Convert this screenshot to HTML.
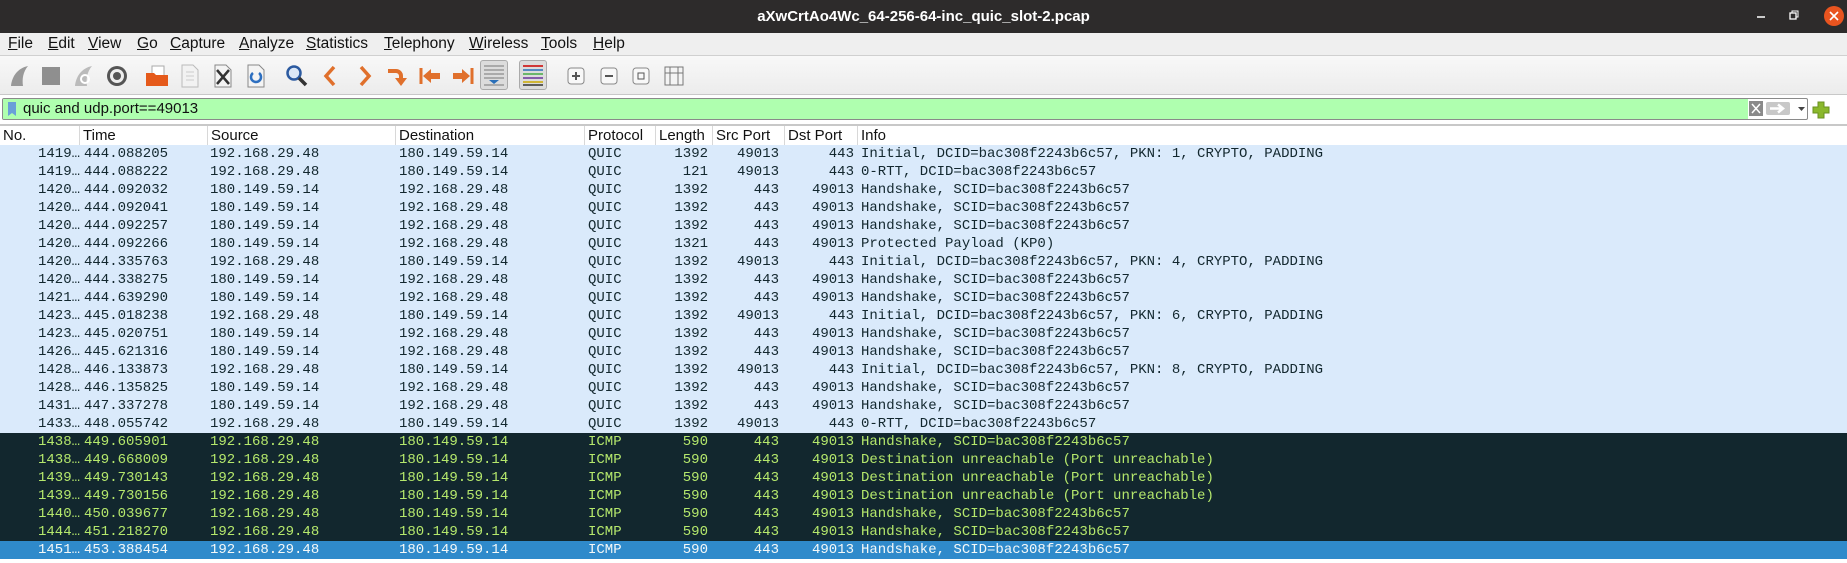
<!DOCTYPE html>
<html><head><meta charset="utf-8"><style>
*{margin:0;padding:0;box-sizing:border-box}
body{width:1847px;height:563px;overflow:hidden;background:#fff;font-family:"Liberation Sans",sans-serif;position:relative}
#title{position:absolute;left:0;top:0;width:1847px;height:33px;background:#2d2b2b;color:#fff;font-weight:bold;font-size:15px;text-align:center;line-height:33px}
#menu{position:absolute;top:33px;left:0;width:1847px;height:22px;background:#efefef;font-size:15.5px;line-height:22px;color:#111}
#menu span{position:absolute;top:0}
#menu u{text-decoration:underline}
#tb{position:absolute;top:55px;left:0;width:1847px;height:40px;background:linear-gradient(#f8f8f8,#ececec);border-top:1px solid #d0d0d0;border-bottom:1px solid #c8c8c8}
.ic{position:absolute;top:8px;width:24px;height:24px}
#flt{position:absolute;top:98px;left:2px;width:1806px;height:22px;border:1px solid #8a8a8a;border-radius:2px;background:#fff;overflow:hidden}
#flt .g{position:absolute;left:0;top:0;width:1745px;height:20px;background:#afffaf}
#flt .t{position:absolute;left:20px;top:0;line-height:20px;font-size:15px;color:#111}
#hdr{position:absolute;top:124px;left:0;width:1847px;height:21px;border-top:2px solid #c8c8c8;background:#fff;font-size:15px;line-height:19px;color:#111}
#hdr span{position:absolute;top:0;padding-left:3px;border-left:1px solid #d8d8d8;height:19px}
.r{position:absolute;left:0;width:1847px;height:18px;font-family:"Liberation Mono",monospace;font-size:14px;line-height:18px;white-space:pre}
.r span{position:absolute;top:0}
.L{background:#daeafb;color:#12272e}
.D{background:#12272e;color:#b5e86c}
.S{background:#2f8acb;color:#f4f8f8}
</style></head><body>
<div id="title">aXwCrtAo4Wc_64-256-64-inc_quic_slot-2.pcap</div>
<svg style="position:absolute;left:1745px;top:5px" width="102" height="24"><line x1="12" y1="12" x2="20" y2="12" stroke="#fff" stroke-width="1.5"/><rect x="45" y="8" width="6" height="6" fill="none" stroke="#fff" stroke-width="1.3"/><path d="M47 8V6h6v6h-2" fill="none" stroke="#fff" stroke-width="1"/><circle cx="89" cy="11" r="10" fill="#e9541f"/><path d="M85 7l8 8M93 7l-8 8" stroke="#fff" stroke-width="1.6"/></svg>
<div id="menu">
<span style="left:8px"><u>F</u>ile</span><span style="left:48px"><u>E</u>dit</span><span style="left:88px"><u>V</u>iew</span><span style="left:137px"><u>G</u>o</span><span style="left:170px"><u>C</u>apture</span><span style="left:239px"><u>A</u>nalyze</span><span style="left:306px"><u>S</u>tatistics</span><span style="left:384px"><u>T</u>elephony</span><span style="left:469px"><u>W</u>ireless</span><span style="left:541px"><u>T</u>ools</span><span style="left:593px"><u>H</u>elp</span>
</div>
<div id="tb">
<svg class="ic" style="left:8px" viewBox="0 0 24 24"><path d="M3 22C4 12 10 4 20 2C15 8 14 15 15 22Z" fill="#999"/></svg>
<svg class="ic" style="left:39px" viewBox="0 0 24 24"><rect x="3" y="3" width="18" height="18" fill="#8f8f8f"/></svg>
<svg class="ic" style="left:72px" viewBox="0 0 24 24"><path d="M3 22C4 12 10 4 20 2C15 8 14 15 15 22Z" fill="#bbb"/><circle cx="13" cy="15" r="4" fill="none" stroke="#fff" stroke-width="2"/></svg>
<svg class="ic" style="left:105px" viewBox="0 0 24 24"><circle cx="12" cy="12" r="10" fill="#555"/><circle cx="12" cy="12" r="7" fill="#eee"/><circle cx="12" cy="12" r="4" fill="#555"/></svg>
<svg class="ic" style="left:145px" viewBox="0 0 24 24"><rect x="7" y="2" width="12" height="10" fill="#fff" stroke="#aaa"/><path d="M1 9h8l2 2h12v11H1Z" fill="#e55a1b"/></svg>
<svg class="ic" style="left:178px" viewBox="0 0 24 24"><path d="M4 1h11l5 5v17H4Z" fill="#f2f2f2" stroke="#bbb"/><path d="M8 8h8M8 12h8M8 16h8" stroke="#ccc"/></svg>
<svg class="ic" style="left:211px" viewBox="0 0 24 24"><path d="M4 1h11l5 5v17H4Z" fill="#f4f4f4" stroke="#888"/><path d="M6 6l12 14M18 6L6 20" stroke="#333" stroke-width="2.5"/></svg>
<svg class="ic" style="left:244px" viewBox="0 0 24 24"><path d="M4 1h11l5 5v17H4Z" fill="#f4f4f4" stroke="#888"/><path d="M15 9a5 5 0 1 1-6 0" fill="none" stroke="#2d6fc0" stroke-width="2.5"/></svg>
<svg class="ic" style="left:285px" viewBox="0 0 24 24"><circle cx="9" cy="9" r="6.5" fill="#dbe7f6" stroke="#2c5aa0" stroke-width="2.5"/><path d="M14 14l7 7" stroke="#333" stroke-width="3.5"/></svg>
<svg class="ic" style="left:319px" viewBox="0 0 24 24"><path d="M15 3L7 12l8 9" fill="none" stroke="#e0702c" stroke-width="3.5"/></svg>
<svg class="ic" style="left:352px" viewBox="0 0 24 24"><path d="M9 3l8 9-8 9" fill="none" stroke="#e0702c" stroke-width="3.5"/></svg>
<svg class="ic" style="left:385px" viewBox="0 0 24 24"><path d="M3 7h8a5 5 0 0 1 5 5v3" fill="none" stroke="#e0702c" stroke-width="4"/><path d="M10 14h12l-6 8Z" fill="#e0702c"/></svg>
<svg class="ic" style="left:418px" viewBox="0 0 24 24"><path d="M3 4v16" stroke="#e0702c" stroke-width="3"/><path d="M5 12l8-7v4h9v6h-9v4Z" fill="#e0702c"/></svg>
<svg class="ic" style="left:451px" viewBox="0 0 24 24"><path d="M21 4v16" stroke="#e0702c" stroke-width="3"/><path d="M19 12l-8-7v4H2v6h9v4Z" fill="#e0702c"/></svg>
<div style="position:absolute;left:480px;top:4px;width:28px;height:30px;border:1px solid #aaa;border-radius:3px;background:#dcdcdc"></div>
<svg class="ic" style="left:482px;top:7px" viewBox="0 0 24 24"><path d="M2 3h20M2 7h20M2 11h20M2 15h20M2 22h20" stroke="#777" stroke-width="1"/><path d="M7 17h10l-5 4Z" fill="#2a6fb8"/></svg>
<div style="position:absolute;left:519px;top:4px;width:28px;height:30px;border:1px solid #aaa;border-radius:3px;background:#dcdcdc"></div>
<svg class="ic" style="left:521px;top:7px" viewBox="0 0 24 24"><path d="M2 3h20" stroke="#c00" stroke-width="1.5"/><path d="M2 7h20" stroke="#2a6fb8" stroke-width="1.5"/><path d="M2 11h20" stroke="#4a4" stroke-width="1.5"/><path d="M2 15h20" stroke="#639" stroke-width="1.5"/><path d="M2 19h20" stroke="#ca0" stroke-width="1.5"/><path d="M2 22h20" stroke="#333" stroke-width="1.5"/></svg>
<svg class="ic" style="left:564px" viewBox="0 0 24 24"><rect x="4" y="4" width="16" height="16" rx="3" fill="#f8f8f8" stroke="#888"/><path d="M12 8v8M8 12h8" stroke="#555" stroke-width="2"/></svg>
<svg class="ic" style="left:597px" viewBox="0 0 24 24"><rect x="4" y="4" width="16" height="16" rx="3" fill="#f8f8f8" stroke="#888"/><path d="M8 12h8" stroke="#555" stroke-width="2"/></svg>
<svg class="ic" style="left:629px" viewBox="0 0 24 24"><rect x="4" y="4" width="16" height="16" rx="3" fill="#f8f8f8" stroke="#888"/><rect x="9" y="9" width="6" height="6" fill="none" stroke="#555"/></svg>
<svg class="ic" style="left:662px" viewBox="0 0 24 24"><rect x="3" y="3" width="18" height="18" fill="#f4f4f4" stroke="#777"/><path d="M8 3v18M16 3v18M3 9h18" stroke="#777"/></svg>
</div>
<div id="flt">
<div class="g"></div>
<svg style="position:absolute;left:3px;top:2px" width="12" height="16"><path d="M2 1h8v14l-4-3-4 3Z" fill="#6a9fd8"/></svg>
<div class="t">quic and udp.port==49013</div>
<svg style="position:absolute;left:1746px;top:2px" width="60" height="16"><rect x="0" y="0" width="14" height="15" fill="#8a8a8a"/><path d="M3 3l8 9M11 3l-8 9" stroke="#fff" stroke-width="1.5"/><rect x="17" y="1" width="24" height="13" rx="2" fill="#c8c8c8"/><path d="M21 7.5h12M29 3.5l5 4-5 4" stroke="#fff" stroke-width="2.5" fill="none"/><path d="M49 6h7l-3.5 4Z" fill="#444"/></svg>
</div>
<svg style="position:absolute;left:1812px;top:101px" width="18" height="18"><path d="M6 1h6v5h5v6h-5v5H6v-5H1V6h5Z" fill="#8ab82c" stroke="#6a9020"/></svg>
<div id="hdr">
<span style="left:0;border:0">No.</span><span style="left:79px">Time</span><span style="left:207px">Source</span><span style="left:395px">Destination</span><span style="left:584px">Protocol</span><span style="left:655px">Length</span><span style="left:712px">Src Port</span><span style="left:784px">Dst Port</span><span style="left:857px">Info</span>
</div>
<div id="rows"></div>
<script>
var d=[
["1419…","444.088205","192.168.29.48","180.149.59.14","QUIC","1392","49013","443","Initial, DCID=bac308f2243b6c57, PKN: 1, CRYPTO, PADDING"],
["1419…","444.088222","192.168.29.48","180.149.59.14","QUIC","121","49013","443","0-RTT, DCID=bac308f2243b6c57"],
["1420…","444.092032","180.149.59.14","192.168.29.48","QUIC","1392","443","49013","Handshake, SCID=bac308f2243b6c57"],
["1420…","444.092041","180.149.59.14","192.168.29.48","QUIC","1392","443","49013","Handshake, SCID=bac308f2243b6c57"],
["1420…","444.092257","180.149.59.14","192.168.29.48","QUIC","1392","443","49013","Handshake, SCID=bac308f2243b6c57"],
["1420…","444.092266","180.149.59.14","192.168.29.48","QUIC","1321","443","49013","Protected Payload (KP0)"],
["1420…","444.335763","192.168.29.48","180.149.59.14","QUIC","1392","49013","443","Initial, DCID=bac308f2243b6c57, PKN: 4, CRYPTO, PADDING"],
["1420…","444.338275","180.149.59.14","192.168.29.48","QUIC","1392","443","49013","Handshake, SCID=bac308f2243b6c57"],
["1421…","444.639290","180.149.59.14","192.168.29.48","QUIC","1392","443","49013","Handshake, SCID=bac308f2243b6c57"],
["1423…","445.018238","192.168.29.48","180.149.59.14","QUIC","1392","49013","443","Initial, DCID=bac308f2243b6c57, PKN: 6, CRYPTO, PADDING"],
["1423…","445.020751","180.149.59.14","192.168.29.48","QUIC","1392","443","49013","Handshake, SCID=bac308f2243b6c57"],
["1426…","445.621316","180.149.59.14","192.168.29.48","QUIC","1392","443","49013","Handshake, SCID=bac308f2243b6c57"],
["1428…","446.133873","192.168.29.48","180.149.59.14","QUIC","1392","49013","443","Initial, DCID=bac308f2243b6c57, PKN: 8, CRYPTO, PADDING"],
["1428…","446.135825","180.149.59.14","192.168.29.48","QUIC","1392","443","49013","Handshake, SCID=bac308f2243b6c57"],
["1431…","447.337278","180.149.59.14","192.168.29.48","QUIC","1392","443","49013","Handshake, SCID=bac308f2243b6c57"],
["1433…","448.055742","192.168.29.48","180.149.59.14","QUIC","1392","49013","443","0-RTT, DCID=bac308f2243b6c57"],
["1438…","449.605901","192.168.29.48","180.149.59.14","ICMP","590","443","49013","Handshake, SCID=bac308f2243b6c57"],
["1438…","449.668009","192.168.29.48","180.149.59.14","ICMP","590","443","49013","Destination unreachable (Port unreachable)"],
["1439…","449.730143","192.168.29.48","180.149.59.14","ICMP","590","443","49013","Destination unreachable (Port unreachable)"],
["1439…","449.730156","192.168.29.48","180.149.59.14","ICMP","590","443","49013","Destination unreachable (Port unreachable)"],
["1440…","450.039677","192.168.29.48","180.149.59.14","ICMP","590","443","49013","Handshake, SCID=bac308f2243b6c57"],
["1444…","451.218270","192.168.29.48","180.149.59.14","ICMP","590","443","49013","Handshake, SCID=bac308f2243b6c57"],
["1451…","453.388454","192.168.29.48","180.149.59.14","ICMP","590","443","49013","Handshake, SCID=bac308f2243b6c57"]];
var h="";
d.forEach(function(r,i){
var c=i<16?"L":(i==22?"S":"D");
h+='<div class="r '+c+'" style="top:'+(145+i*18)+'px">'+
'<span style="right:'+(1847-80)+'px">'+r[0]+'</span>'+
'<span style="left:84px">'+r[1]+'</span>'+
'<span style="left:210px">'+r[2]+'</span>'+
'<span style="left:399px">'+r[3]+'</span>'+
'<span style="left:588px">'+r[4]+'</span>'+
'<span style="right:'+(1847-708)+'px">'+r[5]+'</span>'+
'<span style="right:'+(1847-779)+'px">'+r[6]+'</span>'+
'<span style="right:'+(1847-854)+'px">'+r[7]+'</span>'+
'<span style="left:861px">'+r[8]+'</span></div>';});
document.getElementById("rows").innerHTML=h;
</script>
</body></html>
